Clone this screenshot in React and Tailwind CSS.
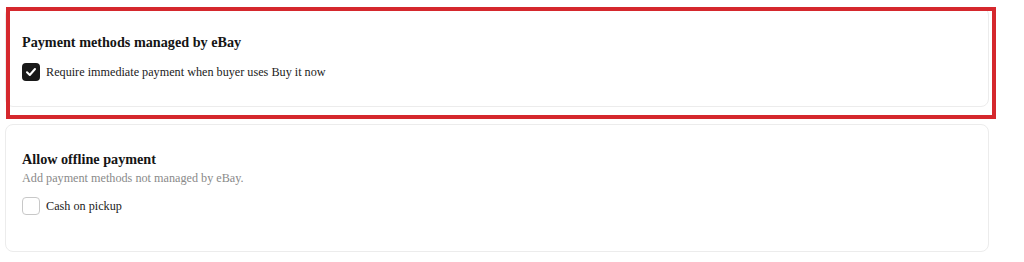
import React from "react";

function CheckBox({ checked }) {
  if (checked) {
    return (
      <span className="flex h-[18px] w-[18px] shrink-0 items-center justify-center rounded-[4px] bg-[#191919]">
        <svg width="12" height="12" viewBox="0 0 12 12" fill="none">
          <path
            d="M2 6.3 L4.8 9 L10 3"
            stroke="#fff"
            strokeWidth="2"
            strokeLinecap="round"
            strokeLinejoin="round"
          />
        </svg>
      </span>
    );
  }
  return (
    <span className="h-[18px] w-[18px] shrink-0 rounded-[4px] border border-[#c8c8c8] bg-white" />
  );
}

function Option({ checked, label }) {
  return (
    <label className="flex items-center gap-[6px] text-[12.2px] leading-[18px] text-[#222]">
      <CheckBox checked={checked} />
      <span>{label}</span>
    </label>
  );
}

export default function App() {
  return (
    <div
      className="relative h-[262px] w-[1024px] overflow-hidden bg-white"
      style={{ fontFamily: '"Liberation Serif", "Times New Roman", serif' }}
    >
      <div className="flex w-[989px] flex-col gap-[17px] pl-[5px] pt-[7px]">
        {/* payment methods managed by eBay */}
        <div className="h-[100px] rounded-lg border border-[#ececec] bg-white pl-[16px] pt-[25px]">
          <h3 className="text-[14.2px] font-bold leading-[18px] text-[#151515]">
            Payment methods managed by eBay
          </h3>
          <div className="mt-[12px]">
            <Option
              checked
              label="Require immediate payment when buyer uses Buy it now"
            />
          </div>
        </div>

        {/* offline payment */}
        <div className="h-[128px] rounded-lg border border-[#ececec] bg-white pl-[16px] pt-[25px]">
          <h3 className="text-[14.2px] font-bold leading-[18px] text-[#151515]">
            Allow offline payment
          </h3>
          <p className="mt-[1px] text-[12.2px] leading-[18px] text-[#8a8a8a]">
            Add payment methods not managed by eBay.
          </p>
          <div className="mt-[10px]">
            <Option label="Cash on pickup" />
          </div>
        </div>
      </div>

      {/* highlight frame */}
      <div className="pointer-events-none absolute left-[6px] top-[7px] h-[112px] w-[990px] border-4 border-[#d5282d]" />
    </div>
  );
}
